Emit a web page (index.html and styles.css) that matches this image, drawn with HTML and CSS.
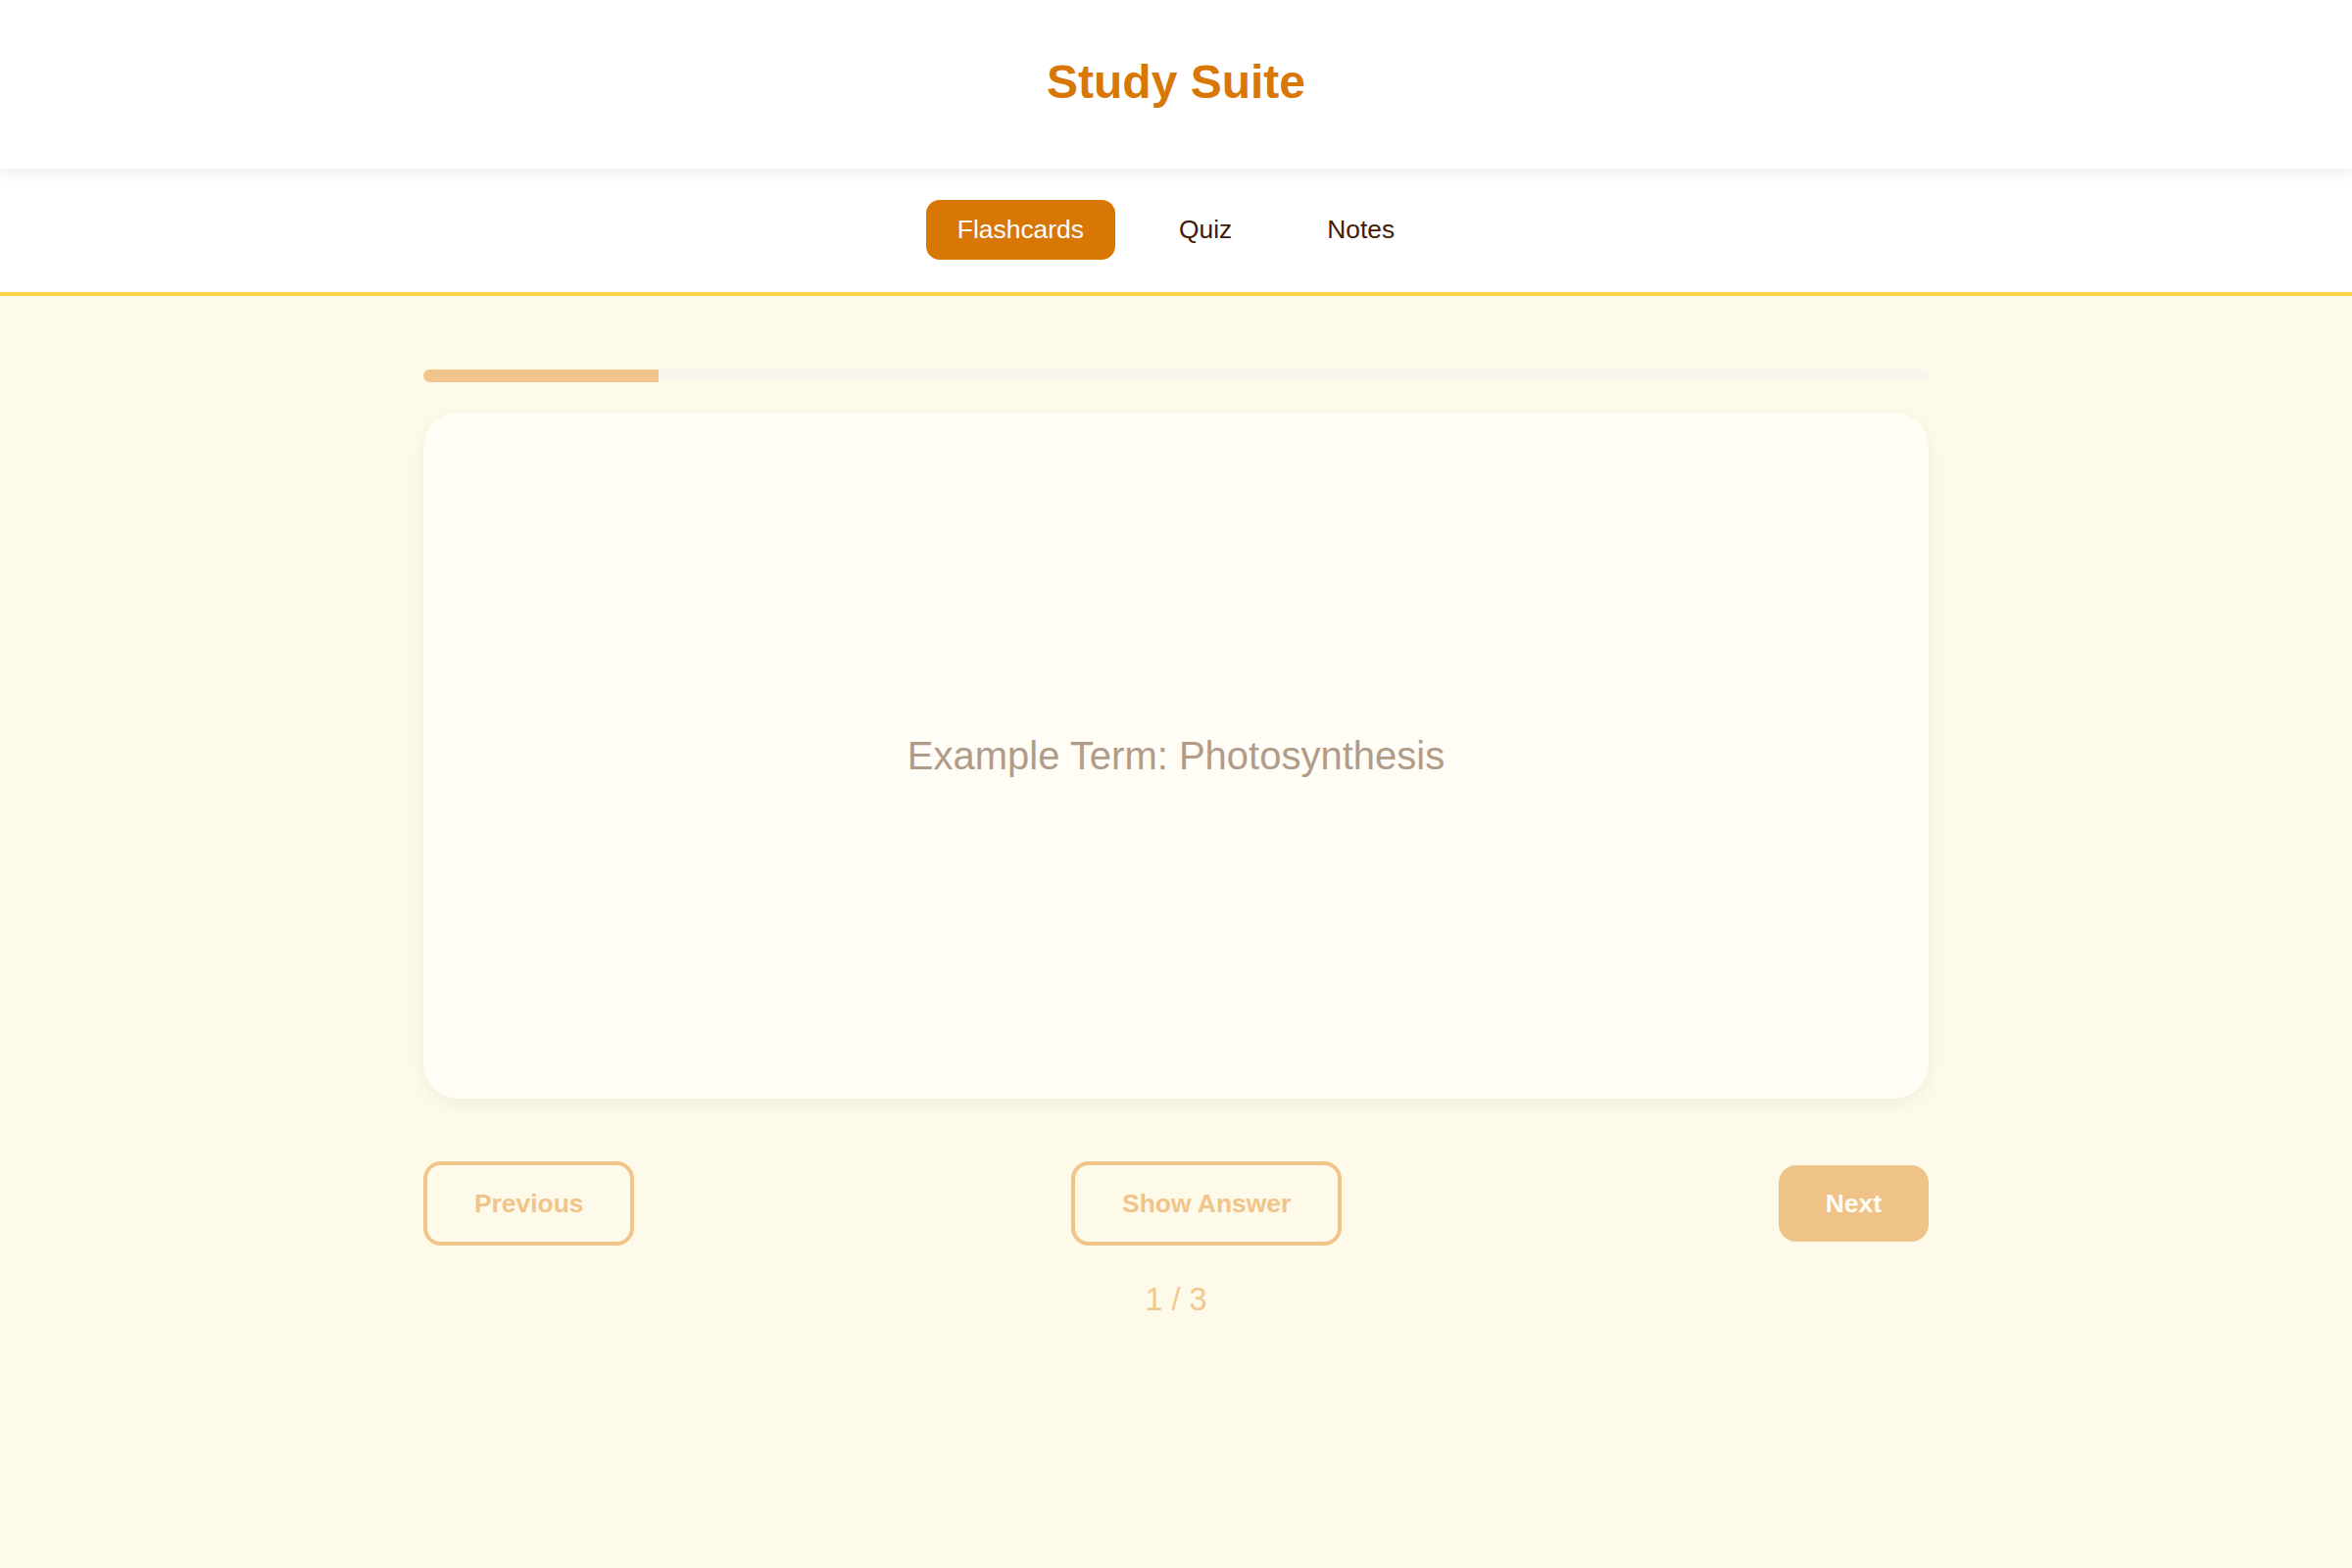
FILE: index.html
```html
<!DOCTYPE html>
<html lang="en">

<head>
  <meta charset="UTF-8">
  <meta name="viewport" content="width=device-width, initial-scale=1.0">
  <title>Study Suite</title>
  <link rel="stylesheet" href="styles.css">
</head>

<body>
  <header class="topbar">
    <h1 class="brand">Study Suite</h1>
  </header>
  <nav class="tabs">
    <button class="tab active">Flashcards</button>
    <button class="tab">Quiz</button>
    <button class="tab">Notes</button>
  </nav>

  <main class="study">
    <div class="progress">
      <div class="progress-fill" style="width: 15.6%"></div>
    </div>

    <div class="card">
      <p class="term">Example Term: Photosynthesis</p>
    </div>

    <div class="controls">
      <button class="btn btn-outline">Previous</button>
      <button class="btn btn-outline">Show Answer</button>
      <button class="btn btn-solid">Next</button>
    </div>

    <div class="counter">1 / 3</div>
  </main>
</body>

</html>
```

FILE: styles.css
```css
body {
  margin: 0;
  min-height: 100vh;
  font-family: "Liberation Sans", Arial, sans-serif;
  background: #fefae9;
}

.topbar {
  position: relative;
  z-index: 1;
  box-sizing: border-box;
  height: 172px;
  padding-bottom: 6px;
  display: flex;
  align-items: center;
  justify-content: center;
  background: #fff;
  box-shadow: 0 4px 14px rgba(0, 0, 0, 0.08);
}

.brand {
  margin: 0;
  font-size: 48px;
  font-weight: 700;
  color: #d97706;
}

.tabs {
  display: flex;
  justify-content: center;
  gap: 33px;
  padding: 32px 0 33px;
  background: #fff;
  border-bottom: 4px solid #fcd34d;
}

.tab {
  padding: 15px 32px;
  border: none;
  border-radius: 14px;
  background: transparent;
  font-family: inherit;
  font-size: 26.4px;
  line-height: 31px;
  color: #451a03;
}

.tab.active {
  background: #d97706;
  color: #fff;
}

.study {
  max-width: 1536px;
  margin: 0 auto;
  padding-top: 75px;
}

.progress {
  height: 13px;
  border-radius: 7px;
  overflow: hidden;
  background: #f8f5ec;
}

.progress-fill {
  height: 100%;
  background: #f0c48a;
}

.card {
  margin-top: 31px;
  height: 700px;
  display: flex;
  align-items: center;
  justify-content: center;
  border-radius: 36px;
  background: #fffdf6;
  box-shadow: 0 6px 20px rgba(0, 0, 0, 0.05);
}

.term {
  margin: 0;
  font-size: 40px;
  color: #b09c89;
}

.controls {
  margin-top: 64px;
  display: flex;
  justify-content: space-between;
  align-items: center;
}

.btn {
  padding: 24px 48px;
  border-radius: 18px;
  font-family: inherit;
  font-size: 26.4px;
  font-weight: 700;
  line-height: 30px;
}

.btn-outline {
  border: 4px solid #f0c48a;
  background: transparent;
  color: #f0c48a;
}

.btn-solid {
  border: none;
  background: #efc287;
  color: #fffdf5;
}

.counter {
  margin-top: 37px;
  text-align: center;
  font-size: 32.5px;
  color: #f2c891;
}
```
